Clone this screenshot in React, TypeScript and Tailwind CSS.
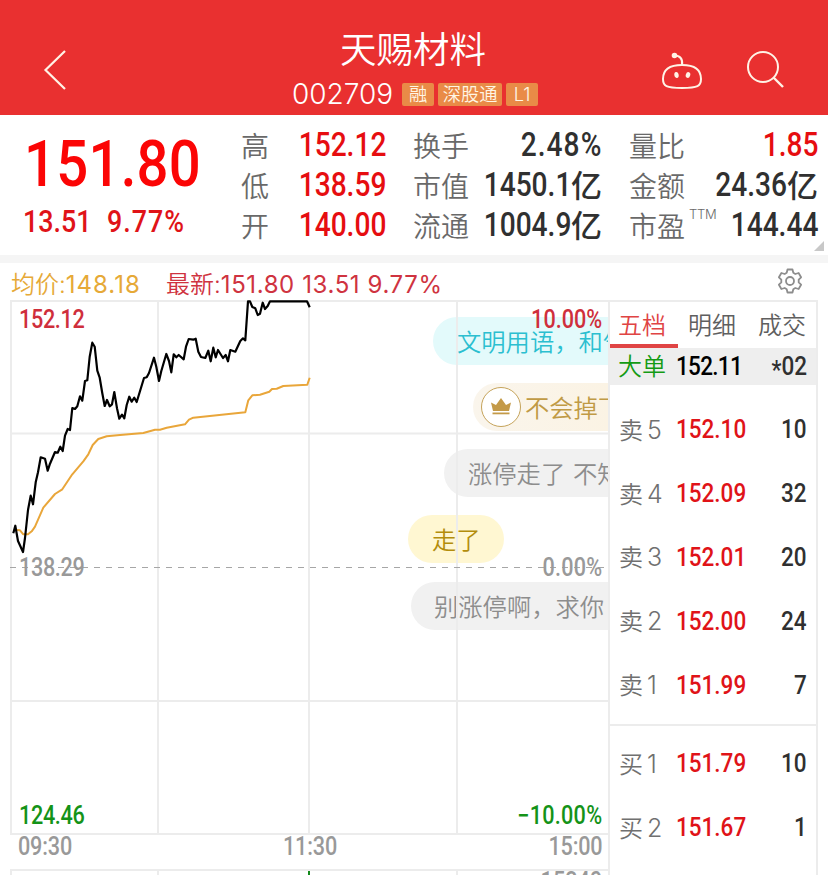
import type { ReactNode } from 'react'
import clsx from 'clsx'

const cjk = "font-['Inter','Noto_Sans_CJK_SC',sans-serif]"

const tags = ['融', '深股通', 'L1']

const statColumns = [
  {
    className: 'ml-[241px] w-[145px]',
    rows: [
      { label: '高', value: '152.12', up: true },
      { label: '低', value: '138.59', up: true },
      { label: '开', value: '140.00', up: true },
    ],
  },
  {
    className: 'ml-[27px] w-[189px]',
    rows: [
      { label: '换手', value: '2.48%' },
      { label: '市值', value: '1450.1', unit: '亿' },
      { label: '流通', value: '1004.9', unit: '亿' },
    ],
  },
  {
    className: 'ml-[27px] w-[189px]',
    rows: [
      { label: '量比', value: '1.85', up: true },
      { label: '金额', value: '24.36', unit: '亿' },
      { label: '市盈', value: '144.44', note: 'TTM' },
    ],
  },
]

const asks = [
  { level: '5', price: '152.10', volume: '10' },
  { level: '4', price: '152.09', volume: '32' },
  { level: '3', price: '152.01', volume: '20' },
  { level: '2', price: '152.00', volume: '24' },
  { level: '1', price: '151.99', volume: '7' },
]

const bids = [
  { level: '1', price: '151.79', volume: '10' },
  { level: '2', price: '151.67', volume: '1' },
]

const pricePoints =
  '13.3,533.3 15.3,525.7 18,541 23,552 25,538 28,510 30.7,495.7 33,504.3 35.7,482.3 38,472.3 40.7,457.3 45,458.7 47.7,470.7 50,463.7 55,452 57.7,452.7 60.3,446.7 62.7,451 65,435.7 67.7,429 70,430 72.3,408 75,409 77.3,406.3 80,396.3 82.3,400.7 85,381 87.3,380.3 89.7,356.7 92.3,342.7 94.7,346.7 97.3,370.7 99.7,377.7 102.3,393.3 104.7,406 107,400 109.7,406.3 112,404.3 114.3,392 117,408.3 119.3,418.7 122,414.7 124.3,418.3 126.7,405 129.3,396.7 131.7,401.7 134.3,397.7 136.7,402 144,378 146.7,377.3 149,373 154,357.7 156.3,366.7 159,381 161.3,371 166.3,354 169,361 171.3,372.3 173.7,354.3 176.3,357.3 178.7,355 183.7,359.3 186,346.7 188.7,339 193.3,339.7 195.7,338.7 198.3,351.7 201,357 205.3,358 208.3,350.7 210.7,361.3 213.3,347.7 215.7,357.3 218,350 223,358 225.7,355 228,361.3 230.3,350 235.3,351.7 240.3,341 243,338.3 245.3,340.3 248,301.3 250,301.3 252.3,307 255.3,308.3 257.7,315 260,313.7 262.7,302.7 265,309 267.7,306 270,301.3 307,301.3 309.7,307.3'

const averagePoints =
  '16,530 20,530.3 23.3,534.3 28,534.3 31.7,531.3 35,526.7 43.3,507.7 55,494 62.3,489.3 72.3,474.3 83.3,461.3 88.3,454.3 92.7,445 98.3,439 106.7,436.3 120,435 143.3,433 155,429.7 160,429.7 166.7,427.7 185,424.3 189,419.7 193.3,417.7 245.3,412.3 248.3,400.3 252.3,395.3 260,394.7 269.3,391.7 272,389 276.7,388.7 283.3,386 307.3,384.7 309.7,377.7'

// Condensed figures, squeezed towards the side they are aligned on
function Num({ children, right, className }: { children: ReactNode; right?: boolean; className?: string }) {
  return (
    <span
      className={clsx(
        "inline-block scale-x-[0.865] font-['Roboto',sans-serif] font-medium whitespace-nowrap",
        right ? 'origin-right' : 'origin-left',
        className,
      )}
    >
      {children}
    </span>
  )
}

function Header() {
  return (
    <header className="flex h-[115px] bg-[#e93030] text-white">
      <div className="w-[200px] pt-[49px] pl-[42px]">
        <svg width="26" height="42" viewBox="0 0 26 42" fill="none" stroke="#fff3e6" strokeWidth="2.2">
          <path d="M23 2 3.500 21 23 40" />
        </svg>
      </div>
      <div className="flex w-[430px] flex-col items-center pt-[30px]">
        <h1 className="-ml-1 h-[40px] text-[36.500px] leading-[40px] font-[350] whitespace-nowrap">天赐材料</h1>
        <div className="mt-[12px] flex h-[24px] items-center gap-1">
          <span className="mr-[5px] text-[28px] leading-none font-[350]">002709</span>
          {tags.map((tag) => (
            <span
              key={tag}
              className="flex h-[23px] min-w-[32px] items-center justify-center rounded-xs bg-[#e98b47] px-[4.500px] text-[18.300px] leading-none font-[350] text-[#fff6e5]"
            >
              {tag}
            </span>
          ))}
        </div>
      </div>
      <div className="flex gap-[43px] pt-[50px] pl-[30px]">
        <svg width="44" height="42" viewBox="0 0 44 42" fill="none" stroke="#fff3e6" strokeWidth="2">
          <path d="M22 15C33 15 41 19 41 29C41 36 38 38 22 38C6 38 3 36 3 29C3 19 11 15 22 15Z" />
          <path d="M22 15C23 9 20 5.500 14.500 5.500" />
          <circle cx="14.500" cy="5.500" r="1.800" fill="#fff3e6" />
          <ellipse cx="16.500" cy="25" rx="2.200" ry="3" fill="#fff3e6" stroke="none" transform="rotate(-8 16.500 25)" />
          <ellipse cx="28" cy="25" rx="2.200" ry="3" fill="#fff3e6" stroke="none" transform="rotate(18 28 25)" />
        </svg>
        <svg width="42" height="42" viewBox="0 0 42 42" fill="none" stroke="#fff3e6" strokeWidth="2">
          <circle cx="16" cy="17" r="15" />
          <path d="M26.500 27.500 36 37" strokeWidth="2.400" />
        </svg>
      </div>
    </header>
  )
}

function Quote() {
  return (
    <section className="relative flex h-[140px] bg-white pt-[10px]">
      <div className="-mr-[219px] w-[219px] pl-[24px] text-[#fb0505]">
        <Num className="block h-[76px] pt-px text-[65px] leading-[76px] tracking-[0.3px]">151.80</Num>
        <div className="flex h-[40px] items-center text-[31px] leading-none text-[#e01318]">
          <Num className="-ml-px w-[84px]">13.51</Num>
          <Num className="tracking-[1.200px]">9.77%</Num>
        </div>
      </div>
      {statColumns.map((column) => (
        <dl key={column.rows[0].label} className={column.className}>
          {column.rows.map((row) => (
            <div key={row.label} className="flex h-[40px] items-center justify-between leading-none">
              <dt className="flex pt-[4px] text-[28px] font-[350] whitespace-nowrap text-[#696969]">
                {row.label}
                {row.note && (
                  <sup className="top-0 -mt-[5px] ml-1 self-start text-[13px] leading-none tracking-[-0.3px]">{row.note}</sup>
                )}
              </dt>
              <dd className={clsx('flex items-center justify-end text-[32.500px]', row.up ? 'text-[#e60d10]' : 'text-[#303030]')}>
                <Num right className={row.value.endsWith('%') && 'tracking-[1.200px]' || undefined}>
                  {row.value}
                </Num>
                {row.unit && <span className="text-[31px] font-medium">{row.unit}</span>}
              </dd>
            </div>
          ))}
        </dl>
      ))}
      <span className="absolute right-[4px] bottom-[4px] border-b-[10px] border-l-[10px] border-b-[#c8c8c8] border-l-transparent" />
    </section>
  )
}

function Summary() {
  return (
    <div className="flex h-[37px] items-center pt-[7px] pr-[24px] pl-[11px] text-[24px] leading-none font-[350]">
      <span className="w-[155px] text-[#e6a937]">
        均价:<span className="font-normal tracking-[1px]">148.18</span>
      </span>
      <span className="grow text-[#cf3340]">
        最新:<span className="font-normal tracking-[0.6px]">151.80 13.51 9.77%</span>
      </span>
      <svg className="-mt-[9px]" width="28" height="28" viewBox="0 0 28 28" fill="none" stroke="#8d8d8d" strokeWidth="1.8" strokeLinejoin="round">
        <path d="M11.500 2.500h5l.8 3.300 2 1.200 3.300-1 2.500 4.300-2.400 2.300v2.800l2.400 2.300-2.500 4.300-3.300-1-2 1.200-.8 3.300h-5l-.8-3.300-2-1.200-3.300 1-2.500-4.300 2.400-2.300v-2.800L2.900 10.300 5.400 6l3.300 1 2-1.200Z" />
        <circle cx="14" cy="14" r="4" />
      </svg>
    </div>
  )
}

function Crown() {
  return (
    <span className="flex size-10 shrink-0 items-center justify-center rounded-full border border-[#c5a35a] bg-white">
      <svg width="22" height="20" viewBox="0 0 22 20" fill="#c49a48">
        <path d="M1 5.500 6 8 11 1l5 7 5-2.500-2 8.500H3Z" />
        <path d="M2.500 15.500h17v1.800h-17Z" />
      </svg>
    </span>
  )
}

function Chart() {
  const bubble = 'absolute flex h-[48px] items-center rounded-l-full pt-[2px] text-[24.300px] font-[350] whitespace-nowrap'
  const mark = 'absolute text-[25px] leading-none'
  return (
    <div className="relative h-[575px] w-[598px] overflow-hidden">
      <div className={clsx(bubble, 'top-[17px] left-[423px] w-[175px] bg-[#e3fafb] pl-[24px] text-[#2bbfd0]')}>
        文明用语，和气
      </div>
      <div className={clsx(bubble, 'top-[83px] left-[463px] w-[135px] bg-linear-to-r from-[#faf5ec] to-[#fbf3e4] pl-[8px] text-[#c09a45]')}>
        <span className="-mt-[2px]">
          <Crown />
        </span>
        <span className="ml-1">不会掉下</span>
      </div>
      <div className={clsx(bubble, 'top-[149px] left-[434px] w-[164px] bg-[#f1f1f1] pl-[24px] text-[#8d8d8d]')}>
        <span className="[word-spacing:1px]">涨停走了 不知</span>
      </div>
      <div className={clsx(bubble, 'top-[215px] left-[398px] w-[96px] rounded-r-full bg-[#fff7d2] pl-[24px] text-[#b38d0c]')}>
        走了
      </div>
      <div className={clsx(bubble, 'top-[282px] left-[401px] w-[197px] bg-[#f1f1f1] pl-[23px] text-[#8d8d8d]')}>
        别涨停啊，求你
      </div>

      <svg className="absolute inset-0" width="599" height="575" viewBox="10 300 599 575" fill="none">
        <g stroke="#ececec" strokeWidth="2">
          <path d="M10 301H609M10 433.500H609M10 701H609M10 834H609M10 870H609" />
          <path d="M11 300V834M158 300V834M309 300V834M457 300V834M11 870V875M158 870V875M457 870V875" />
        </g>
        <path d="M10 567.500H604" stroke="#a6a6a6" strokeWidth="1.200" strokeDasharray="6 6" />
        <path d="M309 871V875" stroke="#158a1c" strokeWidth="2" />
        <polyline points={averagePoints} stroke="#e9a63a" strokeWidth="2" strokeLinejoin="round" />
        <polyline points={pricePoints} stroke="#000" strokeWidth="2.200" strokeLinejoin="round" />
      </svg>

      <Num className={clsx(mark, 'top-[7px] left-[9px] tracking-[-0.400px] text-[#cf2f3c]')}>152.12</Num>
      <Num right className={clsx(mark, 'top-[7px] right-[6px] text-[#cf2f3c]')}>10.00%</Num>
      <Num className={clsx(mark, 'top-[255px] left-[9px] tracking-[-0.400px] text-[#999999]')}>138.29</Num>
      <Num right className={clsx(mark, 'top-[255px] right-[6px] tracking-[0.300px] text-[#999999]')}>0.00%</Num>
      <Num className={clsx(mark, 'top-[503px] left-[9px] tracking-[-0.400px] text-[#149318]')}>124.46</Num>
      <Num right className={clsx(mark, 'top-[503px] right-[6px] tracking-[0.300px] text-[#149318]')}>−10.00%</Num>
      <Num className={clsx(mark, 'top-[534px] left-[8px] tracking-[-0.200px] text-[#999999]')}>09:30</Num>
      <Num className={clsx(mark, 'top-[534px] left-[273px] tracking-[-0.200px] text-[#999999]')}>11:30</Num>
      <Num right className={clsx(mark, 'top-[534px] right-[6px] tracking-[-0.200px] text-[#999999]')}>15:00</Num>
      <Num right className={clsx(mark, 'top-[569px] right-[6px] text-[#999999]')}>15240</Num>
    </div>
  )
}

function Level({ side, level, price, volume }: { side: string; level: string; price: string; volume: string }) {
  return (
    <div className="flex h-[63.800px] items-center pr-[9px] pl-[9px] text-[26px] leading-none">
      <span className="w-[57px] pt-px text-[24px] font-[350] text-[#707070]">
        {side}
        <span className="ml-[4px] text-[25px]">{level}</span>
      </span>
      <Num className="pb-px text-[#e01318]">{price}</Num>
      <Num right className="ml-auto pb-px text-[#303030]">
        {volume}
      </Num>
    </div>
  )
}

function OrderBook() {
  return (
    <aside className="h-[575px] w-[210px] border-t-2 border-r-2 border-l-2 border-[#ececec]">
      <nav className="flex h-[46px] text-[24px] leading-[47px] font-[350] text-[#5f5f5f]">
        <span className="w-[68px] border-b-4 border-[#e04444] pl-[8px] text-[#e04444]">五档</span>
        <span className="pl-[10px]">明细</span>
        <span className="ml-auto pr-[10px]">成交</span>
      </nav>
      <div className="mb-[13px] flex h-[37px] items-center bg-[#eeeeee] pr-[9px] pl-[8px] text-[26px] leading-none">
        <span className="w-[58px] pt-px text-[24px] font-[350] text-[#149b14]">大单</span>
        <Num className="pb-px tracking-[-0.8px] text-black">152.11</Num>
        <Num right className="ml-auto pb-px text-[#303030]">
          <span className="relative top-[4px]">*</span>02
        </Num>
      </div>
      {asks.map((row) => (
        <Level key={row.level} side="卖" {...row} />
      ))}
      <div className="mt-[7px] mb-[6px] h-[2px] bg-[#ececec]" />
      {bids.map((row) => (
        <Level key={row.level} side="买" {...row} />
      ))}
    </aside>
  )
}

export default function App() {
  return (
    <main className={clsx('h-[875px] w-[828px] overflow-hidden bg-white', cjk)}>
      <Header />
      <Quote />
      <div className="h-[8px] bg-[#f5f5f5]" />
      <Summary />
      <div className="flex pl-[10px]">
        <Chart />
        <OrderBook />
      </div>
    </main>
  )
}
